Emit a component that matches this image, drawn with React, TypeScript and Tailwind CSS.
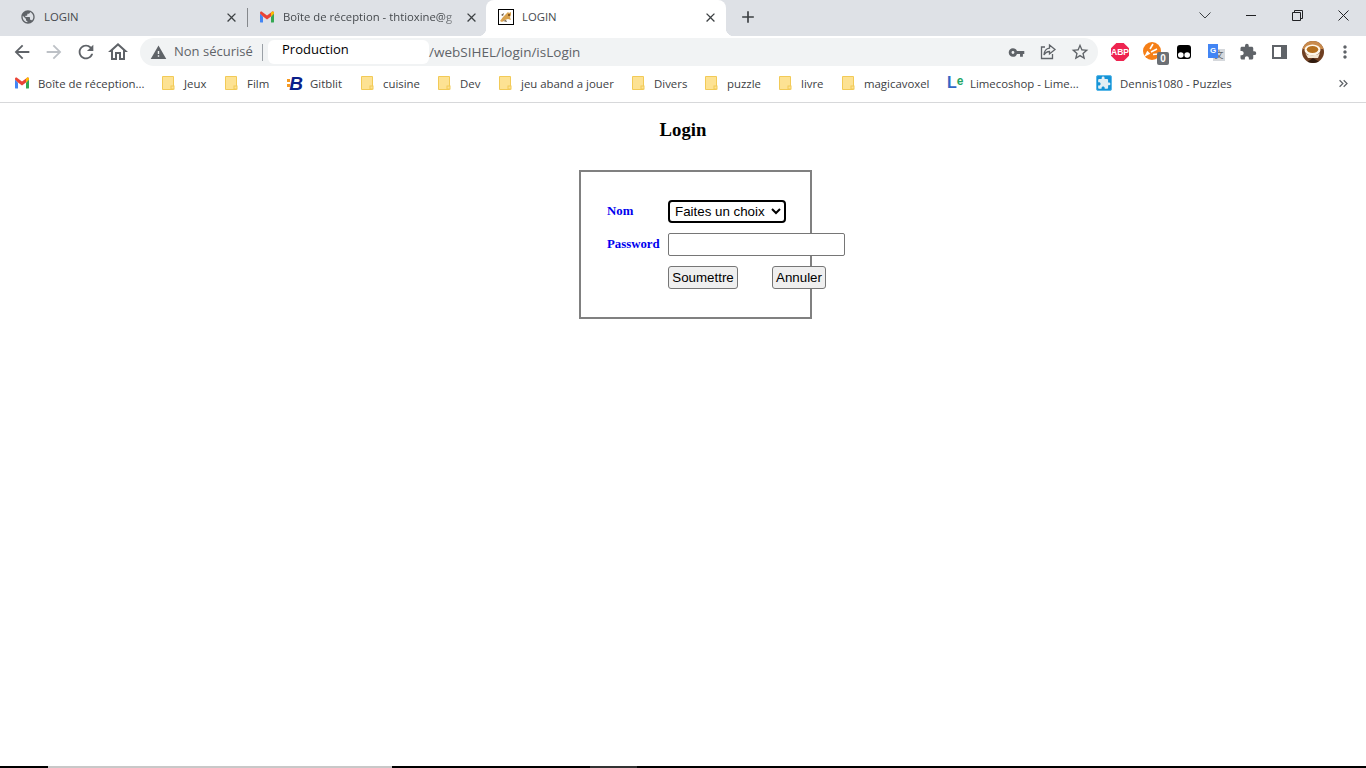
import type { ReactNode } from 'react';
import {
  MdAdd,
  MdArrowBack,
  MdArrowForward,
  MdClose,
  MdExtension,
  MdKeyboardDoubleArrowRight,
  MdMoreVert,
  MdOutlineHome,
  MdPublic,
  MdRefresh,
  MdStarBorder,
  MdVpnKey,
  MdWarning,
} from 'react-icons/md';

const uiFont = "font-['Open_Sans','Noto_Sans',sans-serif]";

function GmailIcon() {
  return (
    <svg width="16" height="16" viewBox="0 0 16 16" className="shrink-0">
      <path d="M1 4.500v8.200c0 .5.4.9.9.9H4V7.500z" fill="#4285f4" />
      <path d="M12 7.500v6.100h2.100c.5 0 .9-.4.9-.9V4.500z" fill="#34a853" />
      <path d="M1 4c0-1.300 1.400-1.800 2.300-1.100L8 6.500l4.700-3.600C13.600 2.200 15 2.700 15 4v.5L12 7.500 8 10.500 4 7.500 1 4.500z" fill="#ea4335" />
      <path d="M12 3.300l.7-.4C13.600 2.200 15 2.700 15 4v.5L12 7.500z" fill="#fbbc04" />
    </svg>
  );
}

function FolderIcon() {
  return (
    <svg width="14" height="16" viewBox="0 0 14 16" className="shrink-0">
      <path d="M1.500 1.500h11v13h-11z" fill="#fde293" stroke="#f2ca57" />
      <rect x="10" y="11" width="3" height="3" fill="#fde293" stroke="#f2ca57" />
    </svg>
  );
}

function GitblitIcon() {
  return (
    <span className="relative flex w-4 h-4 shrink-0 items-center justify-end">
      <span className="absolute left-0 top-[4px] w-[3px] h-[3px] bg-[#f59a23]" />
      <span className="absolute left-0 top-[9px] w-[3px] h-[3px] bg-[#f59a23]" />
      <span className="font-['Liberation_Sans',sans-serif] italic font-bold text-[19px] leading-none text-[#0b1f8a]">B</span>
    </span>
  );
}

function LimeIcon() {
  return (
    <span className="flex w-4 h-4 shrink-0 items-start font-['Liberation_Sans',sans-serif] font-bold leading-none">
      <span className="text-[16px] leading-[16px] text-[#3367c4]">L</span>
      <span className="text-[12px] leading-[12px] text-[#22a565]">e</span>
    </span>
  );
}

function PuzzleIcon() {
  return (
    <span className="flex w-4 h-4 shrink-0 items-center justify-center rounded-[2px] border border-[#5bb8e8] bg-[#1593d6]">
      <MdExtension size={14} className="text-[#e4eef3]" />
    </span>
  );
}

function TomcatIcon() {
  return (
    <svg width="16" height="16" viewBox="0 0 16 16" className="shrink-0">
      <rect x="0.500" y="0.500" width="15" height="15" fill="#fff" stroke="#000" />
      <path d="M2 12l3-4 3-3 2-2 1 1 2-1v3l-1 2 1 3-3-1-3 1-3 2z" fill="#d8a24e" />
      <path d="M3 6l3-2-1 3zM5 12l3-1 1 2z" fill="#6b5a45" />
      <path d="M10 5h2v2h-2z" fill="#8a5a20" />
    </svg>
  );
}

function ShareIcon() {
  return (
    <svg width="18" height="18" viewBox="0 0 18 18" fill="none" stroke="#5f6368" strokeWidth="1.300">
      <path d="M6 4H2.500v11.500h11V11" />
      <path d="M10.500 2l5.500 4.500-5.500 4.500V8.500C8 8.500 6.500 9.500 5 12c.3-4 2.500-6.500 5.500-6.800z" />
    </svg>
  );
}

function AbpIcon() {
  return (
    <svg width="18" height="18" viewBox="0 0 18 18" className="-ml-[1px]">
      <polygon points="5.300,0 12.700,0 18,5.300 18,12.700 12.700,18 5.300,18 0,12.700 0,5.300" fill="#ee2450" />
      <text x="9" y="12" textAnchor="middle" fontFamily="Liberation Sans, sans-serif" fontWeight="700" fontSize="8.500" fill="#fff">ABP</text>
    </svg>
  );
}

function FeedIcon() {
  return (
    <span className="relative flex w-[18px] h-[18px] -mt-[2px]">
      <svg width="18" height="18" viewBox="0 0 18 18" className="-ml-[1px]">
        <circle cx="9" cy="9" r="9" fill="#f57f17" />
        <path d="M3 13l3-1.500-1.500-1.500zM8 10l6-3M7 7l3-5M10 12.500l5-.5" stroke="#fff" strokeWidth="1.600" fill="#fff" />
      </svg>
      <span className="absolute -right-[7px] -bottom-[5px] flex w-3 h-[13px] items-center justify-center rounded-[2px] bg-[#6b6f74] font-['Liberation_Sans',sans-serif] font-bold text-[10px] leading-none text-white">
        0
      </span>
    </span>
  );
}

function TamperIcon() {
  return (
    <svg width="16" height="16" viewBox="0 0 16 16">
      <rect x="1" y="1" width="14" height="14" rx="3" fill="#000" />
      <circle cx="4.800" cy="11" r="2.800" fill="#fff" />
      <circle cx="11.200" cy="11" r="2.800" fill="#fff" />
    </svg>
  );
}

function TranslateIcon() {
  return (
    <span className="relative flex w-[17px] h-[17px]">
      <span className="absolute right-0 bottom-0 flex w-[12px] h-[12px] items-center justify-center bg-[#d5d8dc] text-[9px] leading-none text-[#5f6368] font-['Noto_Sans_CJK_SC',sans-serif]">
        文
      </span>
      <span className="absolute left-0 top-0 flex w-[10px] h-[14px] items-center justify-center bg-[#4285f4] font-['Liberation_Sans',sans-serif] font-bold text-[8px] leading-none text-white">
        G
      </span>
    </span>
  );
}

function SidePanelIcon() {
  return <span className="flex w-[15px] h-[14px] border-2 border-r-[6px] border-[#5f6368] bg-white" />;
}

function AvatarIcon() {
  return (
    <svg width="22" height="22" viewBox="0 0 22 22">
      <clipPath id="avatar"><circle cx="11" cy="11" r="11" /></clipPath>
      <g clipPath="url(#avatar)">
        <rect width="22" height="22" fill="#6f3f22" />
        <rect width="22" height="8" fill="#c98a4b" />
        <ellipse cx="10.500" cy="9" rx="8" ry="5.500" fill="#fff7ea" />
        <ellipse cx="10.500" cy="8.500" rx="5.800" ry="3.500" fill="#b5701f" />
        <path d="M3 12c2 3 12 3 15 0l-2 5H6z" fill="#f4e6d2" />
        <path d="M4 22l7-5 8 5z" fill="#2f1a0e" />
      </g>
    </svg>
  );
}

type TabProps = {
  icon: ReactNode;
  title: string;
  paddingClass: string;
  titleClass?: string;
  closeClass?: string;
};

function Tab({ icon, title, paddingClass, titleClass = '', closeClass = '' }: TabProps) {
  return (
    <div className={`flex h-[36px] w-[240px] shrink-0 items-center pb-[2px] pr-[9px] text-[11.300px] text-[#45494d] ${paddingClass}`}>
      {icon}
      <span className={`ml-2 flex-1 whitespace-nowrap ${titleClass}`}>{title}</span>
      <MdClose size={15} className={`shrink-0 text-[#3c4043] ${closeClass}`} />
    </div>
  );
}

const bookmarks = [
  { label: 'Boîte de réception...', icon: <GmailIcon />, margin: 'ml-[14px]', width: 'w-[106px]', gap: 'ml-[8px]' },
  { label: 'Jeux', icon: <FolderIcon />, margin: 'ml-[17px]', width: 'w-[23px]', gap: 'ml-[9px]' },
  { label: 'Film', icon: <FolderIcon />, margin: 'ml-[17px]', width: 'w-[22px]', gap: 'ml-[9px]' },
  { label: 'Gitblit', icon: <GitblitIcon />, margin: 'ml-[18px]', width: 'w-[32px]', gap: 'ml-[7px]' },
  { label: 'cuisine', icon: <FolderIcon />, margin: 'ml-[18px]', width: 'w-[36px]', gap: 'ml-[9px]' },
  { label: 'Dev', icon: <FolderIcon />, margin: 'ml-[18px]', width: 'w-[21px]', gap: 'ml-[9px]' },
  { label: 'jeu aband a jouer', icon: <FolderIcon />, margin: 'ml-[17px]', width: 'w-[92px]', gap: 'ml-[9px]' },
  { label: 'Divers', icon: <FolderIcon />, margin: 'ml-[18px]', width: 'w-[33px]', gap: 'ml-[9px]' },
  { label: 'puzzle', icon: <FolderIcon />, margin: 'ml-[17px]', width: 'w-[34px]', gap: 'ml-[9px]' },
  { label: 'livre', icon: <FolderIcon />, margin: 'ml-[17px]', width: 'w-[22px]', gap: 'ml-[9px]' },
  { label: 'magicavoxel', icon: <FolderIcon />, margin: 'ml-[18px]', width: 'w-[65px]', gap: 'ml-[9px]' },
  { label: 'Limecoshop - Lime...', icon: <LimeIcon />, margin: 'ml-[18px]', width: 'w-[110px]', gap: 'ml-[7px]' },
  { label: 'Dennis1080 - Puzzles', icon: <PuzzleIcon />, margin: 'ml-[16px]', width: 'w-[112px]', gap: 'ml-[8px]' },
];

function TabStrip() {
  return (
    <div className="flex h-[36px] shrink-0 bg-[#dee1e6]">
      <div className="ml-[7px] flex">
        <Tab
          icon={<MdPublic size={16} className="shrink-0 text-[#5f6368]" />}
          title="LOGIN"
          paddingClass="pl-[13px]"
          closeClass="-mr-[1px]"
        />
        <div className="mt-[8px] h-[19px] w-px bg-[#85888c]" />
        <div className="-ml-[2px]">
          <Tab
            icon={<GmailIcon />}
            title="Boîte de réception - thtioxine@g"
            paddingClass="pl-[13px]"
            titleClass="[mask-image:linear-gradient(to_right,black_88%,transparent)]"
            closeClass="-mr-[2px]"
          />
        </div>
        <div className="relative rounded-t-lg bg-white before:absolute before:-left-2 before:bottom-0 before:h-2 before:w-2 before:bg-[radial-gradient(circle_at_0_0,#dee1e6_8px,#ffffff_8.500px)] after:absolute after:-right-2 after:bottom-0 after:h-2 after:w-2 after:bg-[radial-gradient(circle_at_100%_0,#dee1e6_8px,#ffffff_8.500px)]">
          <Tab icon={<TomcatIcon />} title="LOGIN" paddingClass="pl-[12px]" closeClass="-mr-[1px]" />
        </div>
      </div>
      <div className="ml-[12px] flex h-[36px] items-center pb-[2px]">
        <MdAdd size={20} className="text-[#3c4043]" />
      </div>
      <div className="ml-auto flex h-[30px]">
        <div className="flex w-[46px] items-center justify-center">
          <svg width="12" height="7" viewBox="0 0 12 7" fill="none" stroke="#3c4043"><path d="M.5.500L6 6l5.500-5.500" /></svg>
        </div>
        <div className="flex w-[46px] items-center justify-center">
          <span className="h-px w-[10px] bg-[#202124]" />
        </div>
        <div className="flex w-[46px] items-center justify-center">
          <svg width="11" height="11" viewBox="0 0 11 11" fill="none" stroke="#202124"><path d="M.5 2.500h8v8h-8zM2.500 2.500v-2h8v8h-2" /></svg>
        </div>
        <div className="flex w-[46px] items-center justify-center">
          <svg width="11" height="11" viewBox="0 0 11 11" fill="none" stroke="#202124"><path d="M.5.500l10 10M10.500.500l-10 10" /></svg>
        </div>
      </div>
    </div>
  );
}

function Toolbar() {
  return (
    <div className="flex h-[36px] shrink-0 items-center bg-white pb-[4px]">
      <div className="ml-[11px] flex w-[129px] items-center justify-between pr-[10px]">
        <MdArrowBack size={22} className="text-[#5f6368]" />
        <MdArrowForward size={22} className="text-[#bdc1c6] ml-[2px]" />
        <MdRefresh size={22} className="text-[#5f6368] ml-[2px]" />
        <MdOutlineHome size={24} className="text-[#5f6368] ml-[1px]" />
      </div>
      <div className="flex h-[28px] w-[958px] items-center rounded-full bg-[#f1f3f4] pl-[10px]">
        <MdWarning size={17} className="shrink-0 text-[#5f6368]" />
        <span className="ml-[7px] w-[80px] whitespace-nowrap text-[13px] text-[#5f6368]">Non sécurisé</span>
        <span className="ml-[8px] h-[17px] w-px bg-[#9aa0a6]" />
        <div className="ml-[5px] flex h-[24px] w-[161px] items-start rounded-[6px] bg-white pl-[14px] text-[13px] leading-[19px] text-black">
          Production
        </div>
        <span className="whitespace-nowrap text-[13.500px] text-[#5f6368]">/webSIHEL/login/isLogin</span>
        <div className="ml-auto flex items-center">
          <MdVpnKey size={17} className="text-[#5f6368]" />
          <span className="ml-[14px]"><ShareIcon /></span>
          <MdStarBorder size={20} className="ml-[13px] mr-[8px] text-[#5f6368]" />
        </div>
      </div>
      <div className="ml-[14px] flex w-[32px] justify-start"><AbpIcon /></div>
      <div className="flex w-[32px] justify-start"><FeedIcon /></div>
      <div className="flex w-[32px] justify-start"><TamperIcon /></div>
      <div className="flex w-[32px] justify-start"><TranslateIcon /></div>
      <div className="-ml-[1px] flex w-[32px] justify-start"><MdExtension size={18} className="text-[#5f6368]" /></div>
      <div className="flex w-[32px] justify-start pl-[1px]"><SidePanelIcon /></div>
      <div className="-ml-[1px] flex w-[33px] justify-start"><AvatarIcon /></div>
      <MdMoreVert size={20} className="text-[#5f6368]" />
    </div>
  );
}

function BookmarksBar() {
  return (
    <div className="flex h-[31px] shrink-0 items-center border-b border-[#d7d8da] bg-white pb-[7px] text-[11.400px] text-[#3c4043]">
      {bookmarks.map((b) => (
        <div key={b.label} className={`flex items-center ${b.margin}`}>
          {b.icon}
          <span className={`${b.gap} ${b.width} whitespace-nowrap`}>{b.label}</span>
        </div>
      ))}
      <MdKeyboardDoubleArrowRight size={15} className="ml-auto mr-[15px] text-[#5f6368]" />
    </div>
  );
}

function LoginForm() {
  const labelClass = "w-[61px] shrink-0 font-['Liberation_Serif',serif] font-bold text-[12.800px] text-[#0000ee]";
  const buttonClass =
    "h-[23px] rounded-[3px] border border-[#767676] bg-[#efefef] px-[3px] font-['Liberation_Sans',sans-serif] text-[13.333px] text-black";
  return (
    <main className="flex-1 bg-white">
      <h3 className="mt-[16px] text-center font-['Liberation_Serif',serif] text-[18.720px] font-bold leading-[21px] text-black">Login</h3>
      <div className="ml-[579px] mt-[30px] h-[149px] w-[233px] border-2 border-[#808080] pl-[26px] pt-[28px]">
        <div className="flex items-center">
          <span className={labelClass}>Nom</span>
          <select defaultValue="" className="h-[23px] w-[118px] rounded-[4px] border-2 border-black bg-white pl-[1px] font-['Liberation_Sans',sans-serif] text-[13.333px] text-black">
            <option value="">Faites un choix</option>
          </select>
        </div>
        <div className="mt-[10px] flex items-center">
          <span className={labelClass}>Password</span>
          <input type="password" className="h-[23px] w-[177px] shrink-0 rounded-[2px] border border-[#767676] bg-white" />
        </div>
        <div className="ml-[61px] mt-[10px] flex">
          <button type="button" className={`${buttonClass} w-[70px] shrink-0`}>Soumettre</button>
          <button type="button" className={`${buttonClass} ml-[34px] w-[54px] shrink-0`}>Annuler</button>
        </div>
      </div>
    </main>
  );
}

export default function App() {
  return (
    <div className={`flex h-screen flex-col overflow-hidden bg-white ${uiFont}`}>
      <TabStrip />
      <Toolbar />
      <BookmarksBar />
      <LoginForm />
      <div className="flex h-[2px] shrink-0 bg-black">
        <span className="ml-[48px] w-[344px] bg-[#c8c8c8]" />
        <span className="ml-[198px] w-[47px] bg-[#333333]" />
      </div>
    </div>
  );
}
